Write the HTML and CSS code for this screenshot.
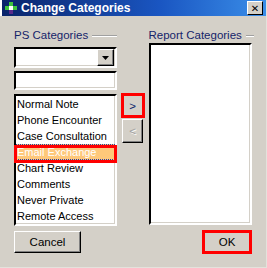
FILE: index.html
```html
<!DOCTYPE html>
<html lang="en">
<head>
    <meta charset="UTF-8">
    <title>Change Categories</title>
    <link rel="stylesheet" href="styles.css">
</head>
<body>
    <div class="window">
        <div class="titlebar">
            <svg class="app-icon" width="12" height="12" viewBox="0 0 12 12">
                <rect x="4" y="0" width="4" height="4" fill="#3fc43f"/>
                <rect x="0" y="4" width="4" height="4" fill="#3fc43f"/>
                <rect x="8" y="4" width="4" height="4" fill="#3fc43f"/>
                <rect x="4" y="8" width="4" height="4" fill="#5a2a8a"/>
                <rect x="4" y="4" width="4" height="4" fill="#ffffff"/>
            </svg>
            <span class="title">Change Categories</span>
            <button class="close-btn">✕</button>
        </div>

        <div class="content">
            <div class="col col-left">
                <div class="group-label"><span>PS Categories</span><i class="etch"></i></div>
                <div class="combo">
                    <div class="combo-arrow">
                        <svg width="7" height="4" viewBox="0 0 7 4"><path d="M0 0h7L3.5 4z" fill="#000"/></svg>
                    </div>
                </div>
                <div class="textbox"></div>
                <ul class="listbox ps-list">
                    <li>Normal Note</li>
                    <li>Phone Encounter</li>
                    <li>Case Consultation</li>
                    <li class="selected">Email Exchange</li>
                    <li>Chart Review</li>
                    <li>Comments</li>
                    <li>Never Private</li>
                    <li>Remote Access</li>
                </ul>
                <button class="btn btn-cancel">Cancel</button>
            </div>

            <div class="col col-mid">
                <button class="btn btn-move marked">&gt;</button>
                <button class="btn btn-back" disabled>&lt;</button>
            </div>

            <div class="col col-right">
                <div class="group-label"><span>Report Categories</span><i class="etch"></i></div>
                <ul class="listbox report-list"></ul>
                <button class="btn btn-ok marked">OK</button>
            </div>
        </div>
    </div>
</body>
</html>
```

FILE: styles.css
```css
:root {
    --face: #d4d0c8;
    --shadow: #808080;
    --dark: #000000;
    --light: #ffffff;
    --label: #14246a;
    --mark: #ff0000;
}

* {
    margin: 0;
    padding: 0;
    box-sizing: border-box;
}

body {
    width: 267px;
    height: 268px;
    background: var(--face);
    font-family: "Liberation Sans", Arial, sans-serif;
    font-size: 11px;
    color: #000;
    overflow: hidden;
}

.window {
    width: 267px;
    height: 268px;
    display: flex;
    flex-direction: column;
    border-right: 1px solid #e4e2dc;
    border-bottom: 1px solid #e4e2dc;
}

.titlebar {
    height: 16px;
    display: flex;
    align-items: center;
    padding-left: 3px;
    padding-right: 3px;
    background: linear-gradient(to right, #0a246a 0%, #1a56c2 60%, #3a8ee8 100%);
    border-left: 2px solid #ffffff;
}

.app-icon {
    flex: none;
}

.title {
    margin-left: 4px;
    color: #ffffff;
    font-weight: bold;
    font-size: 12px;
    line-height: 16px;
}

.close-btn {
    margin-left: auto;
    width: 16px;
    height: 14px;
    background: var(--face);
    border: 1px solid;
    border-color: var(--light) var(--dark) var(--dark) var(--light);
    font-family: "DejaVu Sans", sans-serif;
    font-size: 10px;
    font-weight: bold;
    line-height: 11px;
    color: #000;
}

.content {
    flex: 1;
    display: flex;
    gap: 4px;
    padding: 12px 14px 0 14px;
}

.col {
    display: flex;
    flex-direction: column;
}

.col-left {
    width: 103px;
}

.col-mid {
    width: 24px;
    padding-top: 65px;
    align-items: center;
}

.col-right {
    width: 104px;
}

.group-label {
    height: 14px;
    display: flex;
    align-items: center;
    gap: 4px;
    color: var(--label);
    font-size: 11.5px;
    line-height: 14px;
    white-space: nowrap;
}

.col-right .group-label {
    margin-right: -2px;
}

.etch {
    flex: 1;
    height: 2px;
    border-top: 1px solid #a0a0a0;
    border-bottom: 1px solid #ffffff;
    margin-top: 1px;
}

.combo,
.textbox,
.listbox {
    background: #ffffff;
    border: 2px solid;
    border-color: var(--dark) var(--light) var(--light) var(--dark);
    box-shadow: inset -1px -1px 0 var(--face);
}

.combo {
    margin-top: 5px;
    height: 21px;
    display: flex;
    justify-content: flex-end;
    padding: 0 1px 0 0;
}

.combo-arrow {
    width: 17px;
    height: 17px;
    display: flex;
    align-items: center;
    justify-content: center;
    background: var(--face);
    border: 1px solid;
    border-color: var(--light) var(--dark) var(--dark) var(--light);
    box-shadow: inset -1px -1px 0 var(--shadow);
}

.textbox {
    margin-top: 3px;
    height: 19px;
}

.listbox {
    list-style: none;
}

.ps-list {
    margin-top: 4px;
    height: 132px;
}

.ps-list li {
    position: relative;
    height: 16px;
    line-height: 16px;
    padding-left: 1px;
    font-size: 11px;
    white-space: nowrap;
}

.ps-list li.selected {
    background: #ffc87a;
    color: #ffffff;
    outline: 1px dotted #3040a0;
    outline-offset: -1px;
}

.ps-list li.selected::after {
    content: "";
    position: absolute;
    top: 1px;
    left: -2px;
    right: -2px;
    bottom: -3px;
    border: 3px solid var(--mark);
}

.report-list {
    margin-top: 1px;
    height: 182px;
}

.btn {
    background: var(--face);
    font-family: inherit;
    font-size: 11.5px;
    color: #000;
    border: 1px solid;
    border-color: var(--light) var(--dark) var(--dark) var(--light);
    box-shadow: inset -1px -1px 0 var(--shadow);
}

.btn-cancel {
    margin-top: 5px;
    width: 67px;
    height: 22px;
}

.btn-move {
    width: 24px;
    height: 25px;
    color: #0a246a;
}

.btn-back {
    margin-top: 1px;
    width: 21px;
    height: 24px;
    color: #a0a0a0;
    text-shadow: 1px 1px 0 #ffffff;
}

.btn.marked {
    border: 3px solid var(--mark);
    box-shadow: none;
}

.btn-ok {
    margin-top: 5px;
    align-self: flex-end;
    width: 50px;
    height: 24px;
}
```
